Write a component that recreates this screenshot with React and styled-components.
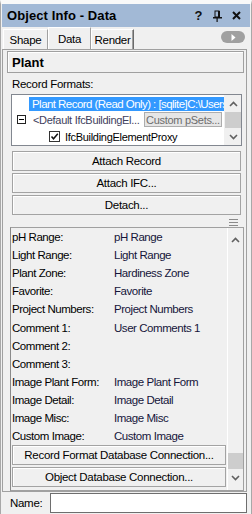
import React from "react";
import styled, { createGlobalStyle } from "styled-components";

const GlobalStyle = createGlobalStyle`
  html, body {
    margin: 0;
    padding: 0;
    background: #f0f0f0;
  }
  body {
    font-family: "Liberation Sans", Arial, sans-serif;
    font-size: 11px;
    letter-spacing: -0.3px;
    color: #000;
  }
  * { box-sizing: border-box; }
`;

const Window = styled.div`
  width: 252px;
  height: 514px;
  display: flex;
  flex-direction: column;
  background: #f0f0f0;
  border-top: 4px solid #f9f9f9;
  border-left: 1px solid #a8a8a8;
  border-right: 1px solid #a8a8a8;
  overflow: hidden;
`;

const TitleBar = styled.div`
  height: 23px;
  flex: none;
  display: flex;
  align-items: center;
  margin: 0 1px;
  padding: 0 4px 0 5px;
  background: #a2b9d6;
  font-weight: bold;
  font-size: 13px;
  letter-spacing: 0.1px;
`;

const TitleIcons = styled.div`
  margin-left: auto;
  display: flex;
`;

const TitleIcon = styled.span`
  width: 19px;
  height: 19px;
  display: flex;
  align-items: center;
  justify-content: center;
  font-size: 13px;
  font-weight: bold;
  color: #111;
`;

const TabRow = styled.div`
  height: 22px;
  flex: none;
  display: flex;
  align-items: flex-end;
  padding: 0 6px 0 2px;
`;

const Tab = styled.div`
  height: ${(p) => (p.$active ? 22 : 20)}px;
  display: flex;
  align-items: center;
  justify-content: center;
  font-size: 11.5px;
  background: #f0f0f0;
  border-top: 1px solid #fff;
  border-left: 1px solid #fff;
  border-right: 1px solid ${(p) => (p.$dark ? "#6a6a6a" : "#a0a0a0")};
  box-shadow: ${(p) => (p.$dark ? "inset -1px 0 0 #a0a0a0" : "none")};
  width: ${(p) => p.$w}px;
`;

const NextPill = styled.div`
  margin: 0 0 6px auto;
  width: 24px;
  height: 12px;
  border-radius: 6px;
  background: #a0a0a0;
  display: flex;
  align-items: center;
  justify-content: center;
`;

const Panel = styled.div`
  height: 443px;
  flex: none;
  margin: 0 4px 0 1px;
  border: 1px solid #a0a0a0;
  padding: 1px 2px 0 4px;
  display: flex;
  flex-direction: column;
`;

const HeaderBox = styled.div`
  height: 22px;
  flex: none;
  border: 1px solid #a0a0a0;
  box-shadow: inset 1px 1px 0 #fff;
  display: flex;
  align-items: center;
  padding-left: 4px;
  font-weight: bold;
  font-size: 13px;
  letter-spacing: 0;
`;

const Section = styled.div`
  flex: none;
  padding: 0 2px 0 4px;
  display: flex;
  flex-direction: column;
`;

const SectionLabel = styled.div`
  height: 19px;
  padding: 3px 0 0 1px;
  line-height: 16px;
  font-size: 11.5px;
`;

const ListBox = styled.div`
  margin-top: 2px;
  height: 52px;
  border: 1px solid #828790;
  background: #fff;
  display: flex;
  overflow: hidden;
`;

const ListRows = styled.div`
  flex: 1;
  min-width: 0;
  padding-top: 2px;
  display: flex;
  flex-direction: column;
`;

const ListRow = styled.div`
  height: ${(p) => p.$h}px;
  flex: none;
  display: flex;
  align-items: center;
  padding-left: ${(p) => p.$indent}px;
  white-space: nowrap;
  overflow: hidden;
`;

const Selected = styled.div`
  flex: 1;
  height: 100%;
  background: #3399ff;
  color: #fff;
  padding-left: 3px;
  display: flex;
  align-items: center;
  overflow: hidden;
  font-size: 11.5px;
  letter-spacing: -0.55px;
`;

const MinusBox = styled.span`
  width: 9px;
  height: 9px;
  border: 1px solid #222;
  flex: none;
  display: flex;
  align-items: center;
  justify-content: center;
  margin-right: 7px;
  &::after {
    content: "";
    width: 5px;
    height: 1px;
    background: #000;
  }
`;

const DefaultText = styled.span`
  color: #3e3e5c;
  width: 111px;
  flex: none;
  overflow: hidden;
`;

const SmallButton = styled.span`
  width: 78px;
  height: 15px;
  flex: none;
  border: 1px solid #adadad;
  background: #e6e6e6;
  color: #6d6d6d;
  display: flex;
  align-items: center;
  justify-content: center;
`;

const CheckBox = styled.span`
  width: 11px;
  height: 11px;
  flex: none;
  border: 1px solid #333;
  background: #fff;
  margin-right: 5px;
  display: flex;
  align-items: center;
  justify-content: center;
`;

const ScrollBar = styled.div`
  width: ${(p) => p.$w}px;
  flex: none;
  display: flex;
  flex-direction: column;
  background: #f0f0f0;
  border-left: 1px solid ${(p) => p.$edge};
  padding-bottom: ${(p) => p.$pb || 0}px;
`;

const ScrollArrow = styled.div`
  height: ${(p) => p.$h}px;
  flex: none;
  display: flex;
  align-items: center;
  justify-content: center;
`;

const ScrollTrack = styled.div`
  flex: 1;
  display: flex;
  flex-direction: column;
  justify-content: ${(p) => p.$align};
`;

const Thumb = styled.div`
  height: 16px;
  background: #cdcdcd;
`;

const ButtonStack = styled.div`
  margin-top: ${(p) => p.$mt}px;
  display: flex;
  flex-direction: column;
  gap: 2px;
  padding: 0 1px;
`;

const Button = styled.div`
  height: 20px;
  border: 1px solid #a3a3a3;
  box-shadow: inset 1px 1px 0 #fff;
  background: #f0f0f0;
  display: flex;
  align-items: center;
  justify-content: center;
  font-size: 11.5px;
`;

const GripRow = styled.div`
  height: 12px;
  flex: none;
  display: flex;
  justify-content: flex-end;
  align-items: flex-start;
  padding: 4px 6px 0 0;
`;

const DataArea = styled.div`
  flex: 1;
  margin-left: 3px;
  border: 1px solid #a0a0a0;
  border-left-color: #8a8a8a;
  display: flex;
  min-height: 0;
`;

const DataRows = styled.div`
  flex: 1;
  min-width: 0;
  display: flex;
  flex-direction: column;
`;

const DataRow = styled.div`
  height: 18.1px;
  flex: none;
  display: grid;
  grid-template-columns: 102px 1fr;
  align-items: center;
  padding-left: 1px;
  white-space: nowrap;
  font-size: 11.5px;
  letter-spacing: -0.45px;
`;

const Value = styled.span`
  color: #15153a;
`;

const NameRow = styled.div`
  height: 22px;
  flex: none;
  display: flex;
  align-items: center;
  padding: 0 4px 1px 9px;
  font-size: 11.5px;
`;

const NameInput = styled.div`
  margin-left: auto;
  width: 197px;
  height: 20px;
  border: 1px solid #6e6e6e;
  background: #fff;
`;

const Chevron = ({ up }) => (
  <svg width="9" height="6" viewBox="0 0 9 6">
    <path
      d={up ? "M1 5 L4.5 1.5 L8 5" : "M1 1 L4.5 4.5 L8 1"}
      fill="none"
      stroke="#606060"
      strokeWidth="1.6"
    />
  </svg>
);

const PinIcon = () => (
  <svg width="11" height="12" viewBox="0 0 11 12">
    <rect x="3" y="1" width="4" height="6" fill="none" stroke="#111" strokeWidth="1" />
    <rect x="6" y="1" width="2" height="6.5" fill="#111" />
    <rect x="1" y="7" width="9" height="1.5" fill="#111" />
    <rect x="4.5" y="8" width="1.2" height="4" fill="#111" />
  </svg>
);

const CloseIcon = () => (
  <svg width="9" height="9" viewBox="0 0 9 9">
    <path d="M1 1 L8 8 M8 1 L1 8" stroke="#111" strokeWidth="2" />
  </svg>
);

const GripIcon = () => (
  <svg width="9" height="7" viewBox="0 0 9 7">
    <rect x="0" y="0" width="9" height="1" fill="#8a8a8a" />
    <rect x="0" y="3" width="9" height="1" fill="#8a8a8a" />
    <rect x="0" y="6" width="9" height="1" fill="#8a8a8a" />
  </svg>
);

const CheckMark = () => (
  <svg width="9" height="9" viewBox="0 0 9 9">
    <path d="M1.5 4.5 L3.5 6.8 L7.8 1.8" fill="none" stroke="#111" strokeWidth="1.5" />
  </svg>
);

const fields = [
  ["pH Range:", "pH Range"],
  ["Light Range:", "Light Range"],
  ["Plant Zone:", "Hardiness Zone"],
  ["Favorite:", "Favorite"],
  ["Project Numbers:", "Project Numbers"],
  ["Comment 1:", "User Comments 1"],
  ["Comment 2:", ""],
  ["Comment 3:", ""],
  ["Image Plant Form:", "Image Plant Form"],
  ["Image Detail:", "Image Detail"],
  ["Image Misc:", "Image Misc"],
  ["Custom Image:", "Custom Image"],
];

export default function App() {
  return (
    <>
      <GlobalStyle />
      <Window>
        <TitleBar>
          Object Info - Data
          <TitleIcons>
            <TitleIcon>?</TitleIcon>
            <TitleIcon>
              <PinIcon />
            </TitleIcon>
            <TitleIcon>
              <CloseIcon />
            </TitleIcon>
          </TitleIcons>
        </TitleBar>

        <TabRow>
          <Tab $w={45}>Shape</Tab>
          <Tab $w={43} $active>
            Data
          </Tab>
          <Tab $w={43} $dark>
            Render
          </Tab>
          <NextPill>
            <svg width="5" height="7" viewBox="0 0 5 7">
              <path d="M0.5 0 L4.5 3.5 L0.5 7 Z" fill="#fff" />
            </svg>
          </NextPill>
        </TabRow>

        <Panel>
          <HeaderBox>Plant</HeaderBox>
          <Section>
            <SectionLabel>Record Formats:</SectionLabel>
            <ListBox>
              <ListRows>
                <ListRow $h={14} $indent={17}>
                  <Selected>Plant Record (Read Only) : [sqlite]C:\Users</Selected>
                </ListRow>
                <ListRow $h={17} $indent={5}>
                  <MinusBox />
                  <DefaultText>&lt;Default IfcBuildingEl...</DefaultText>
                  <SmallButton>Custom pSets...</SmallButton>
                </ListRow>
                <ListRow $h={17} $indent={37}>
                  <CheckBox>
                    <CheckMark />
                  </CheckBox>
                  IfcBuildingElementProxy
                </ListRow>
              </ListRows>
              <ScrollBar $w={17} $edge="#f0f0f0">
                <ScrollArrow $h={17}>
                  <Chevron up />
                </ScrollArrow>
                <ScrollTrack $align="flex-start">
                  <Thumb />
                </ScrollTrack>
                <ScrollArrow $h={17}>
                  <Chevron />
                </ScrollArrow>
              </ScrollBar>
            </ListBox>
            <ButtonStack $mt={5}>
              <Button>Attach Record</Button>
              <Button>Attach IFC...</Button>
              <Button>Detach...</Button>
            </ButtonStack>
          </Section>
          <GripRow>
            <GripIcon />
          </GripRow>
          <DataArea>
            <DataRows>
              {fields.map(([label, value]) => (
                <DataRow key={label}>
                  <span>{label}</span>
                  <Value>{value}</Value>
                </DataRow>
              ))}
              <ButtonStack $mt={0}>
                <Button>Record Format Database Connection...</Button>
                <Button>Object Database Connection...</Button>
              </ButtonStack>
            </DataRows>
            <ScrollBar $w={16} $edge="#ffffff" $pb={4}>
              <ScrollArrow $h={24}>
                <Chevron up />
              </ScrollArrow>
              <ScrollTrack $align="flex-end">
                <Thumb />
              </ScrollTrack>
              <ScrollArrow $h={17}>
                <Chevron />
              </ScrollArrow>
            </ScrollBar>
          </DataArea>
        </Panel>

        <NameRow>
          Name:
          <NameInput />
        </NameRow>
      </Window>
    </>
  );
}
